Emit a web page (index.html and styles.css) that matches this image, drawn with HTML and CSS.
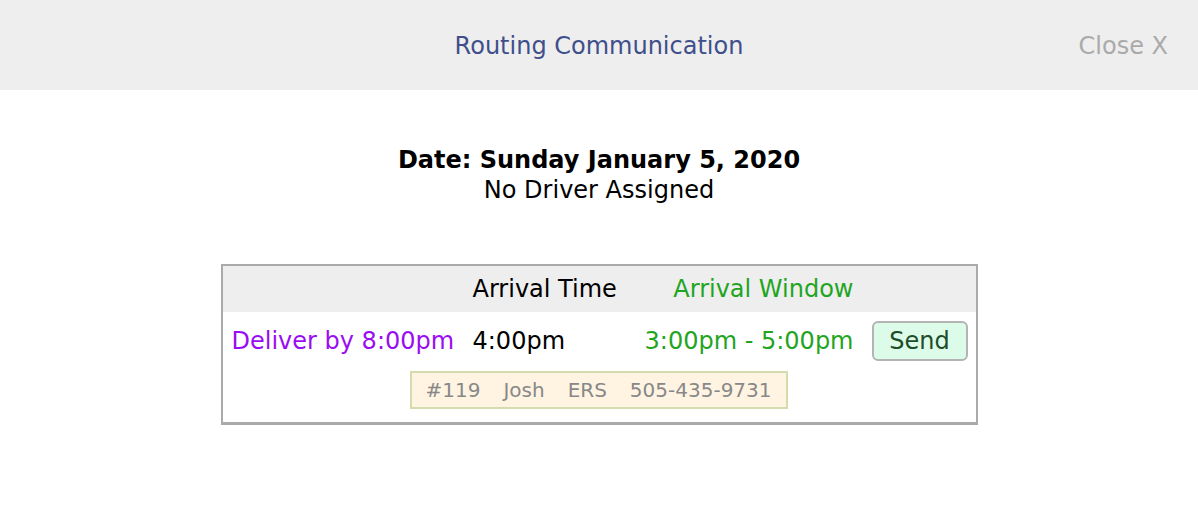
FILE: index.html
```html
<!DOCTYPE html>
<html>
<head>
<meta charset="utf-8">
<link rel="stylesheet" href="styles.css">
</head>
<body>
<div class="topbar">
  <div class="title">Routing Communication</div>
  <div class="close">Close X</div>
</div>
<div class="content">
  <div class="date">Date: Sunday January 5, 2020</div>
  <div class="driver">No Driver Assigned</div>
  <table class="routes">
    <tr class="head">
      <td class="c1"></td>
      <td class="c2">Arrival Time</td>
      <td class="c3 green">Arrival Window</td>
      <td class="c4"></td>
    </tr>
    <tr class="row">
      <td class="c1 purple">Deliver by 8:00pm</td>
      <td class="c2">4:00pm</td>
      <td class="c3 green">3:00pm - 5:00pm</td>
      <td class="c4"><button class="send">Send</button></td>
    </tr>
    <tr class="inforow">
      <td colspan="4">
        <div class="info"><span>#119</span><span>Josh</span><span>ERS</span><span>505-435-9731</span></div>
      </td>
    </tr>
  </table>
</div>
</body>
</html>
```

FILE: styles.css
```css
html, body {
  margin: 0;
  padding: 0;
  background: #fff;
  font-family: "DejaVu Sans", Verdana, sans-serif;
  font-size: 24px;
  color: #000;
}
.topbar {
  height: 90px;
  background: #eeeeee;
  display: flex;
  align-items: center;
  justify-content: center;
  position: relative;
}
.title {
  color: #3f4f8b;
  padding-top: 1px;
}
.close {
  position: absolute;
  right: 30px;
  top: 1px;
  line-height: 90px;
  color: #aaaaaa;
}
.content {
  display: flex;
  flex-direction: column;
  align-items: center;
  padding-top: 55px;
}
.date {
  font-weight: bold;
  line-height: 30px;
}
.driver {
  line-height: 30px;
}
.routes {
  margin-top: 59px;
  border-collapse: collapse;
  border: 2px solid #aaaaaa;
  border-bottom-width: 3px;
}
.routes td {
  white-space: nowrap;
}
.c1 { width: 224px; padding: 0 8px 0 9px; text-align: left; }
.c2 { width: 146px; padding: 0 8px 0 9px; text-align: left; }
.c3 { width: 219px; padding: 0 8px 0 8px; text-align: right; }
.c4 { width: 96px; padding: 0 8px 0 10px; }
.head td {
  background: #eeeeee;
  line-height: 30px;
  padding-top: 8px;
  padding-bottom: 8px;
}
.row td {
  padding-top: 9px;
  padding-bottom: 5px;
  line-height: 30px;
  vertical-align: middle;
}
.green { color: #1fa51f; }
.purple { color: #9a0df2; }
.send {
  font-family: "DejaVu Sans", Verdana, sans-serif;
  font-size: 24px;
  color: #1f4d2a;
  background: #dcfce9;
  border: 2px solid #b4b4b4;
  border-radius: 6px;
  height: 40px;
  width: 96px;
  padding: 0;
  display: block;
}
.inforow td {
  padding: 5px 0 13px;
  text-align: center;
}
.info {
  display: inline-flex;
  gap: 23px;
  background: #fff3e2;
  border: 2px solid #d2dcae;
  padding: 0 14px 0 13px;
  line-height: 34px;
  font-size: 20px;
  color: #888888;
}
```
